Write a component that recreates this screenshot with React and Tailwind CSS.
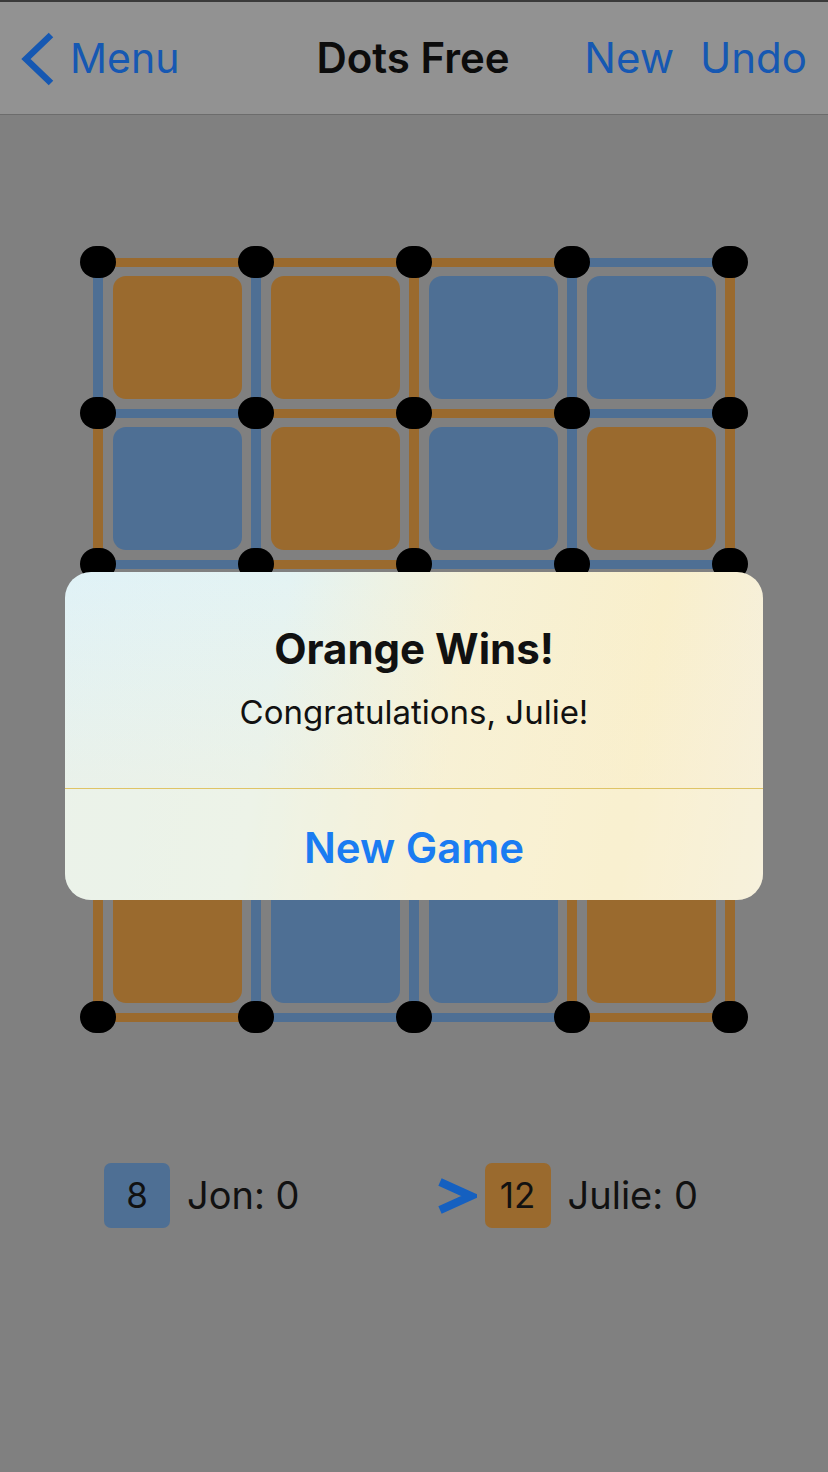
import React from "react";

const O = "bg-[#9a6a2e]";
const B = "bg-[#4e6f94]";

const boxes = [
  ["o", "o", "b", "b"],
  ["b", "o", "b", "o"],
  ["o", "o", "b", "o"],
  ["o", "o", "o", "b"],
  ["o", "b", "b", "o"],
];
const hLines = [
  ["o", "o", "o", "b"],
  ["b", "o", "o", "b"],
  ["b", "o", "b", "b"],
  ["o", "o", "b", "o"],
  ["o", "b", "b", "o"],
  ["o", "b", "b", "o"],
];
const vLines = [
  ["b", "b", "o", "b", "o"],
  ["o", "b", "o", "b", "o"],
  ["o", "o", "b", "b", "o"],
  ["o", "o", "o", "b", "o"],
  ["o", "b", "b", "o", "o"],
];

const col = (k) => (k === "o" ? O : B);

function Board() {
  const cells = [];
  for (let r = 0; r < 11; r++) {
    for (let c = 0; c < 9; c++) {
      const key = `${r}-${c}`;
      if (r % 2 === 0 && c % 2 === 0) {
        cells.push(
          <div
            key={key}
            className="relative z-10 -mx-[4px] -my-[2px] h-[32px] w-[36px] rounded-full bg-black"
          />
        );
      } else if (r % 2 === 0) {
        cells.push(
          <div
            key={key}
            className={`-mx-[14px] h-[9px] self-center ${col(hLines[r / 2][(c - 1) / 2])}`}
          />
        );
      } else if (c % 2 === 0) {
        cells.push(
          <div
            key={key}
            className={`-my-[14px] w-[10px] justify-self-center ${col(vLines[(r - 1) / 2][c / 2])}`}
          />
        );
      } else {
        cells.push(
          <div
            key={key}
            className={`h-[123px] w-[129px] justify-self-center rounded-[13px] ${col(boxes[(r - 1) / 2][(c - 1) / 2])}`}
          />
        );
      }
    }
  }
  return (
    <div className="mx-auto mt-[133px] grid w-[660px] grid-cols-[28px_130px_28px_130px_28px_130px_28px_130px_28px] grid-rows-[28px_123px_28px_123px_28px_123px_28px_123px_28px_123px_28px]">
      {cells}
    </div>
  );
}

export default function App() {
  return (
    <div
      className="relative h-[1472px] w-[828px] overflow-hidden bg-[#808080]"
      style={{ fontFamily: "Inter, 'Liberation Sans', sans-serif" }}
    >
      {/* Nav bar */}
      <div className="flex h-[115px] items-center border-t-2 border-b border-t-[#3a3a3a] border-b-[#6c6c6c] bg-[#929292]">
        <div className="flex items-center pl-[20px]">
          <svg width="36" height="56" viewBox="0 0 36 56" className="mt-[2px]">
            <polyline
              points="31,4 6,28 31,52"
              fill="none"
              stroke="#1658b2"
              strokeWidth="6.5"
              strokeLinecap="butt"
              strokeLinejoin="miter"
            />
          </svg>
          <span className="ml-[14px] text-[41px] leading-none text-[#1658b2]">Menu</span>
        </div>
        <div className="ml-[137px] text-[42px] font-semibold leading-none text-[#0c0c0c]">
          Dots Free
        </div>
        <div className="ml-auto flex items-center pr-[21px] text-[42px] leading-none text-[#1658b2]">
          <span>New</span>
          <span className="ml-[26px]">Undo</span>
        </div>
      </div>

      <Board />

      {/* Scores */}
      <div className="mt-[132px] flex h-[65px] items-center">
        <div className="ml-[104px] flex items-center">
          <div className="flex h-[65px] w-[66px] items-center justify-center rounded-[7px] bg-[#4e6f94] text-[35px] text-[#111]">
            8
          </div>
          <span className="ml-[17px] text-[38px] text-[#111]">Jon: 0</span>
        </div>
        <div className="ml-[137px] flex items-center">
          <svg width="40" height="36" viewBox="0 0 40 36">
            <polyline
              points="3,4 34,18 3,32"
              fill="none"
              stroke="#1560c0"
              strokeWidth="8"
              strokeLinecap="butt"
              strokeLinejoin="miter"
            />
          </svg>
          <div className="ml-[8px] flex h-[65px] w-[66px] items-center justify-center rounded-[7px] bg-[#9a6a2e] text-[35px] text-[#111]">
            12
          </div>
          <span className="ml-[17px] text-[38px] text-[#111]">Julie: 0</span>
        </div>
      </div>

      {/* Alert */}
      <div className="absolute left-[65px] top-[572px] z-20 w-[698px] overflow-hidden rounded-[26px] bg-[linear-gradient(100deg,#e0f2f7_0%,#e4f3f3_30%,#f6f1d6_55%,#f9efcb_80%,#f5f0e0_100%)]">
        <div className="bg-[linear-gradient(180deg,rgba(255,255,255,0)_0%,rgba(250,240,210,0.35)_100%)] px-[20px] pb-[57px] pt-[54px] text-center">
          <div className="text-[42px] font-bold leading-[46px] text-[#111]">
            Orange Wins!
          </div>
          <div className="mt-[21px] text-[33px] leading-[38px] text-[#111]">
            Congratulations, Julie!
          </div>
        </div>
        <div className="h-px bg-[#dfc466]" />
        <div className="flex h-[111px] items-center justify-center bg-[rgba(250,242,215,0.4)] pt-[6px] text-[42px] font-semibold text-[#1a7cf2]">
          New Game
        </div>
      </div>
    </div>
  );
}
